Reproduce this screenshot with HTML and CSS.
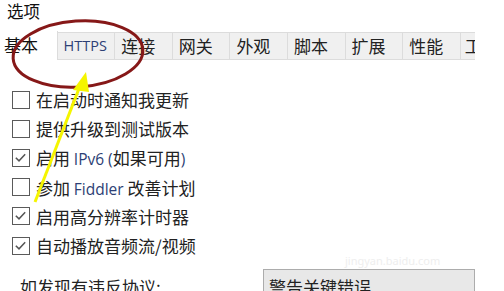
FILE: index.html
```html
<!DOCTYPE html>
<html lang="zh">
<head>
<meta charset="utf-8">
<link rel="stylesheet" href="styles.css">
</head>
<body>
<div class="page">
  <div class="title">选项</div>
  <div class="tabs">
    <div class="tab active">基本</div>
    <div class="tab latin">HTTPS</div>
    <div class="tab">连接</div>
    <div class="tab">网关</div>
    <div class="tab">外观</div>
    <div class="tab">脚本</div>
    <div class="tab">扩展</div>
    <div class="tab">性能</div>
    <div class="tab cut">工</div>
  </div>
  <div class="panel">
    <div class="row"><span class="box"></span><span>在启动时通知我更新</span></div>
    <div class="row"><span class="box"></span><span>提供升级到测试版本</span></div>
    <div class="row"><span class="box checked"><svg viewBox="0 0 16 16"><path d="M3 8.2 L6.4 11.6 L13 4.6"/></svg></span><span>启用 <span class="en">IPv6 (</span>如果可用<span class="en">)</span></span></div>
    <div class="row"><span class="box"></span><span>参加 <span class="en">Fiddler</span> 改善计划</span></div>
    <div class="row"><span class="box checked"><svg viewBox="0 0 16 16"><path d="M3 8.2 L6.4 11.6 L13 4.6"/></svg></span><span>启用高分辨率计时器</span></div>
    <div class="row"><span class="box checked"><svg viewBox="0 0 16 16"><path d="M3 8.2 L6.4 11.6 L13 4.6"/></svg></span><span>自动播放音频流/视频</span></div>
    <div class="bottom">
      <span class="label">如发现有违反协议:</span>
      <div class="combo">警告关键错误</div>
    </div>
  </div>
  <div class="watermark">jingyan.baidu.com</div>
  <svg class="annot" width="504" height="291" viewBox="0 0 504 291">
    <ellipse cx="78" cy="54" rx="65" ry="33" transform="rotate(-4 78 54)" fill="none" stroke="#861818" stroke-width="3"/>
    <line x1="35" y1="202" x2="80" y2="86" stroke="#f5f500" stroke-width="3"/>
    <polygon points="86,72 73,90 89,92" fill="#f5f500"/>
  </svg>
</div>
</body>
</html>
```
FILE: styles.css
```css
html, body {
  margin: 0;
  padding: 0;
  background: #fff;
}
.page {
  position: relative;
  width: 504px;
  height: 291px;
  overflow: hidden;
  font-family: "Noto Sans CJK SC", "Noto Sans", sans-serif;
  font-size: 17px;
  color: #222;
}
.title {
  height: 32px;
  padding-left: 7px;
  line-height: 22px;
  font-size: 16.5px;
  color: #111;
}
.tabs {
  display: flex;
  width: 475px;
  height: 28px;
  border-bottom: 1px solid #dcdcdc;
  box-sizing: border-box;
}
.tab {
  flex: 0 0 57.6px;
  box-sizing: border-box;
  height: 28px;
  border: 1px solid #dcdcdc;
  border-left: none;
  background: #f0f0f0;
  padding-left: 6px;
  line-height: 26px;
  font-size: 17px;
  color: #222;
  white-space: nowrap;
  overflow: hidden;
}
.tab.active {
  background: #fff;
  border: none;
  border-right: 1px solid #dcdcdc;
  height: 29px;
  margin-top: -1px;
  padding-left: 4px;
  line-height: 28px;
  color: #111;
}
.tab.latin {
  font-family: "Open Sans", "Noto Sans", sans-serif;
  font-size: 14.5px;
  color: #2d3f75;
}
.tab.cut {
  flex: 0 0 14px;
  border-right: none;
  padding-left: 4px;
}
.panel {
  padding: 25px 0 0 12px;
}
.row {
  display: flex;
  align-items: center;
  height: 29.2px;
  gap: 6px;
  font-size: 17px;
  color: #222;
}
.en {
  font-family: "Open Sans", "Noto Sans", sans-serif;
  color: #2d3f75;
  font-size: 15.5px;
}
.box {
  flex: 0 0 auto;
  width: 18px;
  height: 18px;
  box-sizing: border-box;
  border: 1.5px solid #5a5a5a;
  background: #fff;
  display: flex;
}
.box svg {
  width: 15px;
  height: 15px;
}
.box path {
  fill: none;
  stroke: #555;
  stroke-width: 1.6;
}
.bottom {
  display: flex;
  align-items: flex-start;
  margin-top: 9px;
  padding-left: 8px;
}
.label {
  width: 243px;
  padding-top: 5px;
  font-size: 17px;
  color: #222;
}
.combo {
  width: 212px;
  height: 30px;
  box-sizing: border-box;
  border: 1px solid #acacac;
  background: #e8e8e8;
  padding: 4px 0 0 5px;
  font-size: 17px;
  color: #222;
}
.watermark {
  position: absolute;
  left: 345px;
  top: 253px;
  font-family: "Noto Sans", sans-serif;
  font-size: 11px;
  color: #eeeeee;
}
.annot {
  position: absolute;
  left: 0;
  top: 0;
  pointer-events: none;
}
```
